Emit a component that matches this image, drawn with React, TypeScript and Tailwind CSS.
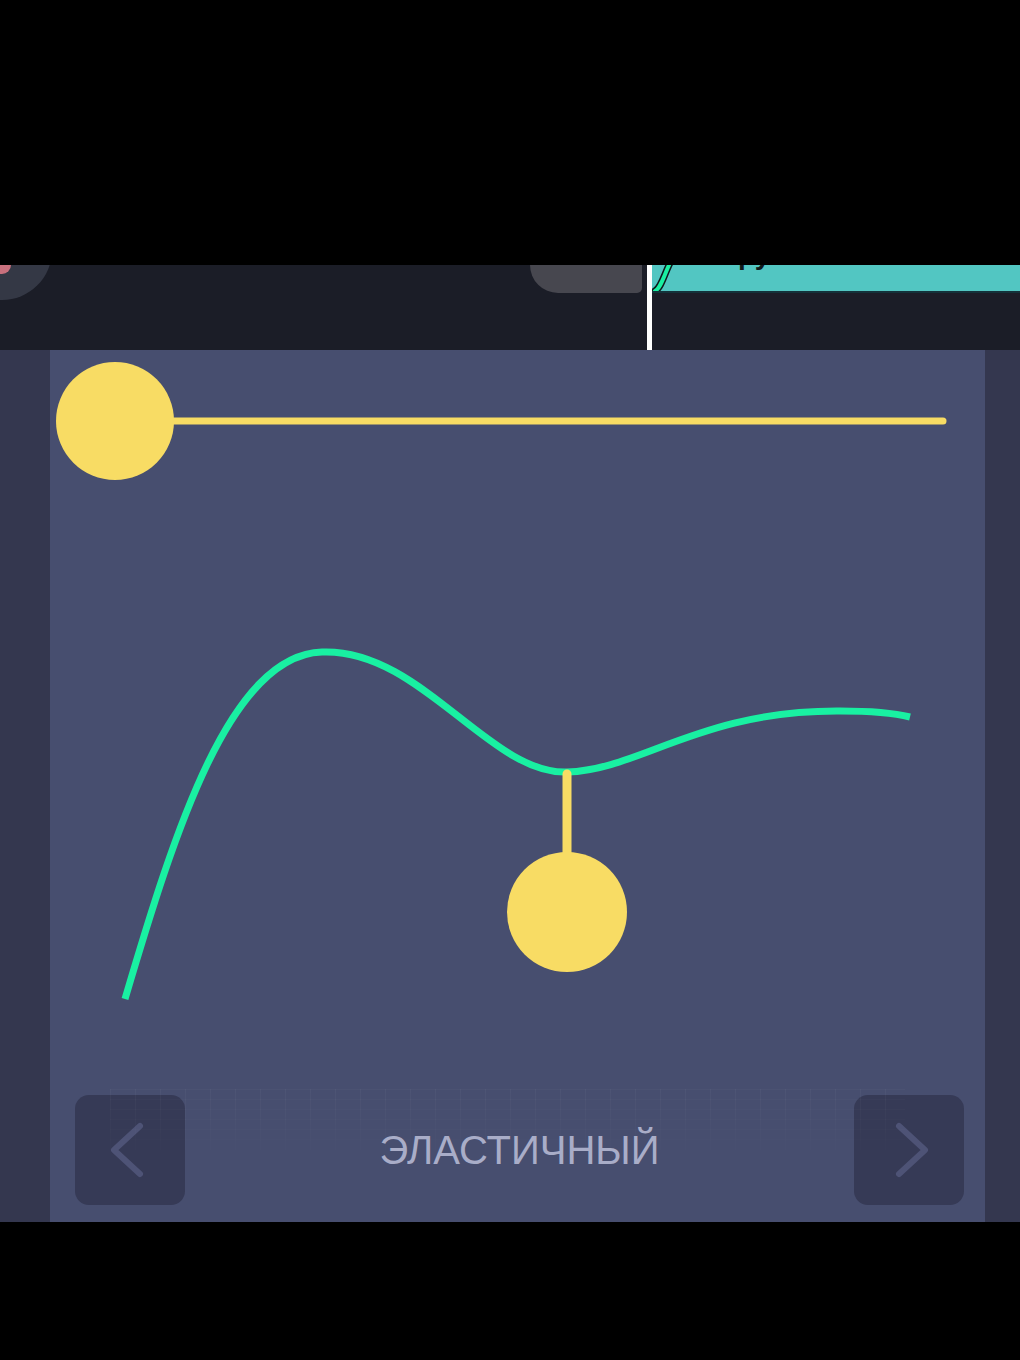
import React from 'react';

const YELLOW = '#f8dc64';
const GREEN = '#19f0a2';

function Chevron({ dir }: { dir: 'left' | 'right' }) {
  const d = dir === 'left' ? 'M38 14 L12 38 L38 62' : 'M18 14 L44 38 L18 62';
  return (
    <svg width="56" height="76" viewBox="0 0 56 76" fill="none">
      <path d={d} stroke="#4e5376" strokeWidth="6" strokeLinecap="round" strokeLinejoin="round" />
    </svg>
  );
}

function NavButton({ dir }: { dir: 'left' | 'right' }) {
  return (
    <button className="flex h-[110px] w-[110px] items-center justify-center rounded-[14px] bg-[#363a56]">
      <Chevron dir={dir} />
    </button>
  );
}

export default function App() {
  return (
    <div className="flex h-[1360px] w-[1020px] flex-col overflow-hidden bg-black">
      {/* letterbox */}
      <div className="h-[265px] shrink-0" />

      {/* timeline strip */}
      <div className="relative flex h-[85px] shrink-0 items-start overflow-hidden bg-[#1b1d27]">
        <div className="-ml-[48px] -mt-[65px] h-[100px] w-[100px] shrink-0 rounded-full bg-[#343845]" />
        <div className="absolute left-0 top-0 h-[9px] w-[11px] rounded-br-[10px] bg-[#c8707d]" />
        <div className="ml-[478px] h-[28px] w-[112px] shrink-0 rounded-bl-[34px] rounded-br-[6px] bg-[#47474f]" />
        <div className="ml-[5px] h-full w-[5px] shrink-0 bg-white" />
        <div className="relative h-[28px] flex-1 overflow-hidden border-b-2 border-[#14323a] bg-[#52c6c2]">
          <svg className="absolute left-0 top-0" width="30" height="28" viewBox="0 0 30 28" fill="none">
            <path d="M3 26 C9 23, 12 10, 18 -2" stroke="#0f1a1c" strokeWidth="7" strokeLinecap="round" />
            <path d="M3 26 C9 23, 12 10, 18 -2" stroke={GREEN} strokeWidth="4" strokeLinecap="round" />
          </svg>
          <div className="-mt-[24px] ml-[86px] font-['Liberation_Sans',sans-serif] text-[28px] font-bold leading-none text-[#10181a]">
            ру
          </div>
        </div>
      </div>

      {/* easing panel */}
      <div className="flex h-[872px] shrink-0">
        <div className="w-[50px] shrink-0 bg-[#34374f]" />
        <div className="flex w-[935px] shrink-0 flex-col bg-[#474e6f]">
          <svg width="935" height="735" viewBox="50 350 935 735" fill="none" className="shrink-0">
            {/* progress slider */}
            <line x1="160" y1="421" x2="943" y2="421" stroke={YELLOW} strokeWidth="7" strokeLinecap="round" />
            <circle cx="115" cy="421" r="59" fill={YELLOW} />
            {/* elastic curve */}
            <path
              d="M125 999 C175 830, 230 655, 322 652 C420 648, 490 775, 567 772 C640 770, 700 710, 840 711 C880 711, 898 714, 910 717"
              stroke={GREEN}
              strokeWidth="7"
              strokeLinecap="butt"
            />
            {/* pendulum */}
            <line x1="567" y1="774" x2="567" y2="870" stroke={YELLOW} strokeWidth="9" strokeLinecap="round" />
            <circle cx="567" cy="912" r="60" fill={YELLOW} />
          </svg>

          <div className="relative flex flex-1 items-start justify-between pl-[25px] pr-[21px] pt-[10px]">
            <div className="pointer-events-none absolute left-[60px] right-[80px] top-[4px] h-[72px] bg-[linear-gradient(to_right,rgba(255,255,255,0.035)_1px,transparent_1px),linear-gradient(to_bottom,rgba(255,255,255,0.025)_1px,transparent_1px)] bg-[size:25px_10px] [mask-image:linear-gradient(to_bottom,black,transparent)]" />
            <NavButton dir="left" />
            <span className="relative mt-[31px] font-['Liberation_Sans',sans-serif] text-[40px] leading-[48px] text-[#a9adc8]">
              ЭЛАСТИЧНЫЙ
            </span>
            <NavButton dir="right" />
          </div>
        </div>
        <div className="flex-1 bg-[#34374f]" />
      </div>
    </div>
  );
}
